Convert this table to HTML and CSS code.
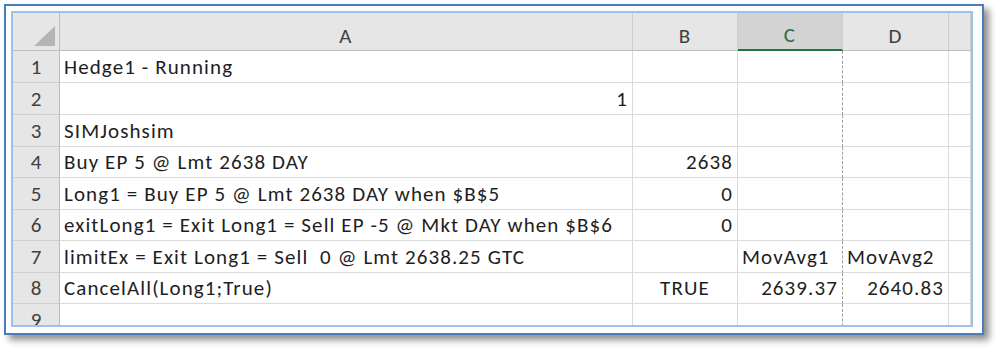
FILE: index.html
```html
<!DOCTYPE html>
<html lang="en">
<head>
  <meta charset="UTF-8">
  <title>Hedge1 sheet</title>
  <link rel="stylesheet" href="styles.css">
</head>
<body>

  <div class="frame">
    <div class="sheet">
      <!-- Column headers -->
      <div class="hd corner">
        <svg width="21" height="20" viewBox="0 0 21 20"><polygon points="0,20 21,20 21,0" fill="#b5b5b5"/></svg>
      </div>
      <div class="hd">A</div>
      <div class="hd">B</div>
      <div class="hd sel">C</div>
      <div class="hd">D</div>
      <div class="hd"></div>

      <!-- Row 1 -->
      <div class="rh">1</div>
      <div class="cell">Hedge1 - Running</div>
      <div class="cell"></div>
      <div class="cell brk"></div>
      <div class="cell"></div>
      <div class="cell"></div>

      <!-- Row 2 -->
      <div class="rh">2</div>
      <div class="cell num">1</div>
      <div class="cell"></div>
      <div class="cell brk"></div>
      <div class="cell"></div>
      <div class="cell"></div>

      <!-- Row 3 -->
      <div class="rh">3</div>
      <div class="cell">SIMJoshsim</div>
      <div class="cell"></div>
      <div class="cell brk"></div>
      <div class="cell"></div>
      <div class="cell"></div>

      <!-- Row 4 -->
      <div class="rh">4</div>
      <div class="cell">Buy EP 5 @ Lmt 2638 DAY</div>
      <div class="cell num">2638</div>
      <div class="cell brk"></div>
      <div class="cell"></div>
      <div class="cell"></div>

      <!-- Row 5 -->
      <div class="rh">5</div>
      <div class="cell">Long1 = Buy EP 5 @ Lmt 2638 DAY when $B$5</div>
      <div class="cell num">0</div>
      <div class="cell brk"></div>
      <div class="cell"></div>
      <div class="cell"></div>

      <!-- Row 6 -->
      <div class="rh">6</div>
      <div class="cell">exitLong1 = Exit Long1 = Sell EP -5 @ Mkt DAY when $B$6</div>
      <div class="cell num">0</div>
      <div class="cell brk"></div>
      <div class="cell"></div>
      <div class="cell"></div>

      <!-- Row 7 -->
      <div class="rh">7</div>
      <div class="cell">limitEx = Exit Long1 = Sell&nbsp; 0 @ Lmt 2638.25 GTC</div>
      <div class="cell"></div>
      <div class="cell brk">MovAvg1</div>
      <div class="cell">MovAvg2</div>
      <div class="cell"></div>

      <!-- Row 8 -->
      <div class="rh">8</div>
      <div class="cell">CancelAll(Long1;True)</div>
      <div class="cell mid">TRUE</div>
      <div class="cell num brk">2639.37</div>
      <div class="cell num">2640.83</div>
      <div class="cell"></div>

      <!-- Row 9 (cut off by the frame) -->
      <div class="rh">9</div>
      <div class="cell"></div>
      <div class="cell"></div>
      <div class="cell brk"></div>
      <div class="cell"></div>
      <div class="cell"></div>
    </div>
  </div>

</body>
</html>
```

FILE: styles.css
```css
* {
  margin: 0;
  padding: 0;
  box-sizing: border-box;
}

body {
  width: 996px;
  height: 348px;
  background: #fff;
  font-family: Calibri, Carlito, Lato, sans-serif;
  color: #1e1e1e;
  padding: 4px 0 0 4px;
}

/* Picture frame: dark blue rim, white mat, light blue inner rim */
.frame {
  width: 980px;
  height: 331px;
  border: 2px solid #4a7dba;
  padding: 5px 9px 6px 5px;
  background: #fff;
  box-shadow: 5px 5px 7px rgba(0, 0, 0, 0.45);
}

.sheet {
  height: 316px;
  border: 2px solid #9cc3e6;
  overflow: hidden;
  display: grid;
  grid-template-columns: 47px 573px 105px 105px 106px 22px;
  grid-template-rows: 38px 32px 32px 32px 31px 32px 31px 32px 31px 32px;
  font-size: 21px;
  letter-spacing: 1.1px;
}

.sheet > div {
  display: flex;
  align-items: flex-end;
  padding: 0 4px 2px;
  white-space: nowrap;
  overflow: hidden;
}

/* Column header row */
.hd {
  background: #e6e6e6;
  border-right: 1px solid #cdcdcd;
  border-bottom: 1px solid #bdbdbd;
  justify-content: center;
  color: #404040;
  padding-bottom: 1px !important;
}

.hd.corner {
  justify-content: flex-end;
  padding: 0 4px 4px 0 !important;
  border-right-color: #bdbdbd;
}

.hd.sel {
  background: #d3d3d3;
  color: #217346;
  border-bottom: 2px solid #217346;
}

/* Row numbers */
.rh {
  background: #e6e6e6;
  border-right: 1px solid #bdbdbd;
  border-bottom: 1px solid #cfcfcf;
  justify-content: center;
  color: #404040;
  letter-spacing: 0;
}

.cell {
  border-right: 1px solid #dadada;
  border-bottom: 1px solid #dadada;
}

.num {
  justify-content: flex-end;
  padding-right: 4px !important;
}

.mid {
  justify-content: center;
}

/* Page break line between C and D */
.brk {
  border-right: 1px dashed #9e9e9e;
}
```
